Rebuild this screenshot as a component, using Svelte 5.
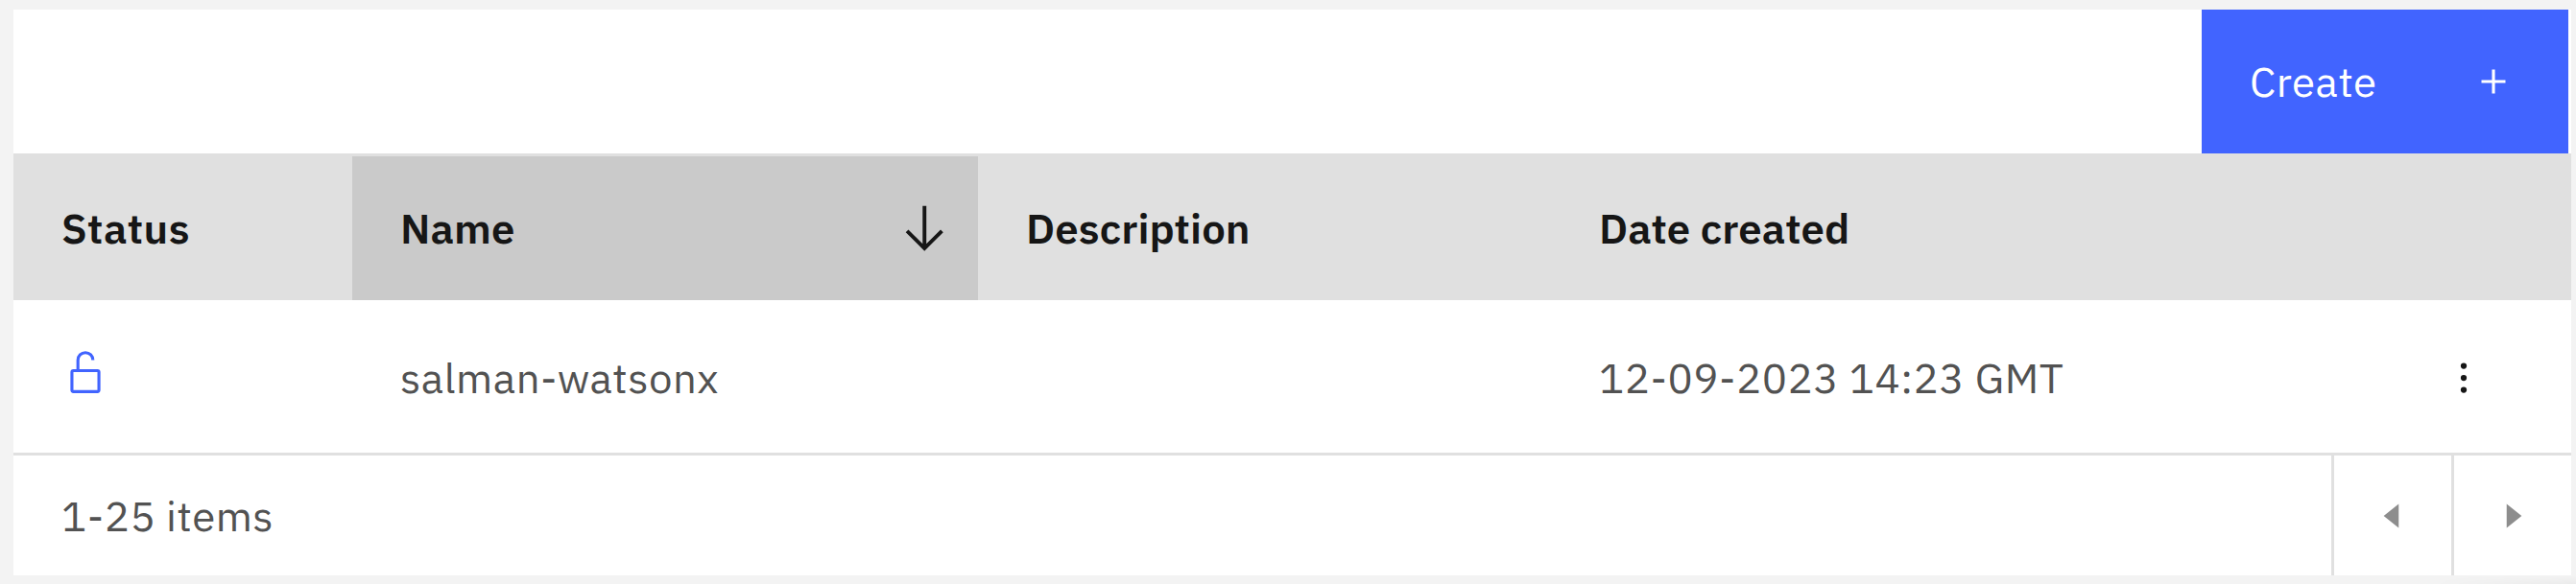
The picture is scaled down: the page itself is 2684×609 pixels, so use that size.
<script>
  const rows = [{ name: 'salman-watsonx', description: '', created: '12-09-2023 14:23 GMT' }];
</script>

<main class="page">
  <section class="card">
    <div class="toolbar">
      <button class="create">
        <span>Create</span>
        <svg class="add" viewBox="0 0 32 32" fill="currentColor" aria-hidden="true">
          <path d="M17 15V8h-2v7H8v2h7v7h2v-7h7v-2z" />
        </svg>
      </button>
    </div>

    <div class="row head">
      <div class="cell status-head">Status</div>
      <div class="cell sorted">
        <span>Name</span>
        <svg class="arrow" viewBox="0 0 32 32" fill="currentColor" aria-hidden="true">
          <path d="M24.59 16.59L17 24.17V4h-2v20.17l-7.59-7.58L6 18l10 10 10-10z" />
        </svg>
      </div>
      <div class="cell">Description</div>
      <div class="cell">Date created</div>
      <div class="cell"></div>
    </div>

    {#each rows as row}
      <div class="row body">
        <div class="cell status">
          <svg class="lock" viewBox="0 0 32 32" fill="currentColor" aria-hidden="true">
            <path
              d="M24 14H12V8a4 4 0 0 1 8 0h2A6 6 0 0 0 10 8v6H8a2 2 0 0 0-2 2v12a2 2 0 0 0 2 2h16a2 2 0 0 0 2-2V16a2 2 0 0 0-2-2zm0 14H8V16h16z"
            />
          </svg>
        </div>
        <div class="cell">{row.name}</div>
        <div class="cell">{row.description}</div>
        <div class="cell">{row.created}</div>
        <div class="cell actions">
          <svg class="menu" viewBox="0 0 32 32" fill="currentColor" aria-hidden="true">
            <circle cx="16" cy="8" r="2" />
            <circle cx="16" cy="16" r="2" />
            <circle cx="16" cy="24" r="2" />
          </svg>
        </div>
      </div>
    {/each}

    <div class="pagination">
      <span class="range">1-25 items</span>
      <button class="page-btn" aria-label="Previous">
        <svg viewBox="0 0 32 32" fill="currentColor"><path d="M20 24L10 16 20 8z" /></svg>
      </button>
      <button class="page-btn" aria-label="Next">
        <svg viewBox="0 0 32 32" fill="currentColor"><path d="M12 8L22 16 12 24z" /></svg>
      </button>
    </div>
  </section>
  <div class="shade"></div>
</main>

<style>
  :global(body) {
    background: #f3f3f3;
  }
  .page {
    box-sizing: border-box;
    height: 609px;
    padding: 10px 5px 0 14px;
    overflow: hidden;
    position: relative;
    background: #f3f3f3;
    font: 400 43.75px/56px 'IBM Plex Sans', Roboto, sans-serif;
    letter-spacing: 0.5px;
    color: #525252;
  }
  .card {
    height: 590px;
    background: #fff;
  }
  svg {
    display: block;
    flex: none;
    width: 50px;
    height: 50px;
  }
  button {
    box-sizing: border-box;
    margin: 0;
    border: 0;
    border-radius: 0;
    font: inherit;
    letter-spacing: inherit;
  }
  .toolbar {
    display: flex;
    justify-content: flex-end;
    height: 150px;
    padding-right: 3px;
  }
  .create {
    display: flex;
    align-items: center;
    justify-content: space-between;
    width: 382px;
    padding: 0 53px 0 50px;
    background: #4164ff;
    color: #fff;
  }
  .row {
    display: grid;
    grid-template-columns: 353px 652px 597px 840px 223px;
  }
  .cell {
    box-sizing: border-box;
    display: flex;
    align-items: center;
    padding-left: 50px;
    white-space: nowrap;
  }
  .head {
    height: 153px;
    box-sizing: border-box;
    border-top: 3px solid #e0e0e0;
    background: #e0e0e0;
    color: #161616;
    font-weight: 600;
    letter-spacing: 0.08px;
  }
  .status-head {
    letter-spacing: 0.5px;
  }
  .sorted {
    justify-content: space-between;
    padding-right: 25px;
    background: #cacaca;
  }
  .arrow {
    width: 62.5px;
    height: 62.5px;
  }
  .body {
    height: 159px;
  }
  .body .cell {
    padding-top: 2px;
  }
  .body .status {
    padding-top: 0;
    padding-bottom: 9px;
    color: #4164ff;
  }
  .body .actions {
    padding-left: 86px;
    color: #161616;
  }
  .pagination {
    box-sizing: border-box;
    display: flex;
    height: 128px;
    border-top: 3px solid #e0e0e0;
  }
  .range {
    flex: 1;
    align-self: center;
    padding-left: 50px;
  }
  .page-btn {
    display: flex;
    align-items: center;
    justify-content: center;
    width: 125px;
    padding: 0;
    border-left: 3px solid #e0e0e0;
    background: transparent;
    color: #8d8d8d;
  }
  .shade {
    position: absolute;
    right: 0;
    bottom: 0;
    width: 150px;
    height: 9px;
    background: linear-gradient(to bottom, transparent, rgba(0, 0, 0, 0.03));
    mask-image: linear-gradient(to right, transparent, #000);
  }
</style>
